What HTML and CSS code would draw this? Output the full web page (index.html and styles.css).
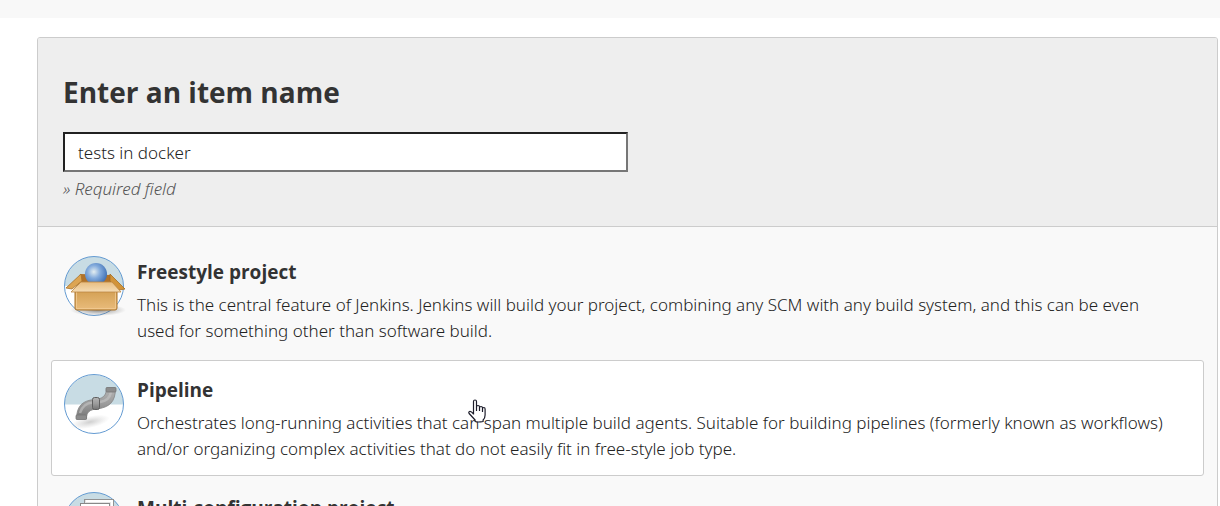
FILE: index.html
```html
<!DOCTYPE html>
<html lang="en">
<head>
<meta charset="utf-8">
<title>New Item</title>
<link rel="stylesheet" href="styles.css">
</head>
<body>
<header class="topbar"></header>
<main class="panel">
  <form class="name-form">
    <h1 class="form-title"><label for="name">Enter an item name</label></h1>
    <input class="name-input" id="name" type="text" value="tests in docker" aria-describedby="name-hint">
    <p class="hint" id="name-hint">» Required field</p>
  </form>
  <ul class="items">
    <li class="item">
      <svg class="item-icon" viewBox="0 0 64 62" aria-hidden="true">
        <defs>
          <radialGradient id="ball" cx=".4" cy=".4" r=".65"><stop offset="0" stop-color="#e4eef0"/><stop offset=".45" stop-color="#83abdc"/><stop offset="1" stop-color="#3c6eb4"/></radialGradient>
          <linearGradient id="box" x2="0" y2="1"><stop offset="0" stop-color="#d39f52"/><stop offset="1" stop-color="#e9bc7c"/></linearGradient>
          <linearGradient id="flap" x2="0" y2="1"><stop offset="0" stop-color="#e8bd80"/><stop offset="1" stop-color="#f5dcb4"/></linearGradient>
          <radialGradient id="shade"><stop offset="0" stop-color="#555" stop-opacity=".7"/><stop offset="1" stop-color="#777" stop-opacity="0"/></radialGradient>
        </defs>
        <circle cx="30" cy="30" r="29.500" fill="#fff"/>
        <path d="M.5 30a29.500 29.500 0 0 1 59 0z" fill="#c8dce4"/>
        <circle cx="30" cy="30" r="29.500" fill="none" stroke="#649bd2"/>
        <ellipse cx="34" cy="54" rx="28" ry="6" fill="url(#shade)"/>
        <path d="m16 18 31 1v14H13z" fill="#b0722a"/>
        <path d="m17 18-15 14 6 1 10-8z" fill="#dda552" stroke="#a87128" stroke-width=".8"/>
        <path d="m46 18 15 15-6 1-9-9z" fill="#d19339" stroke="#a46d22" stroke-width=".8"/>
        <circle cx="32" cy="18" r="11" fill="url(#ball)"/>
        <path d="M11 34h42v18q0 2-2 2H13q-2 0-2-2z" fill="url(#box)" stroke="#a8722a"/>
        <path d="M12.500 36v16.500h39V36" fill="none" stroke="#f2cc94" stroke-width=".8"/>
        <path d="M17 26h31l9 10H7z" fill="url(#flap)" stroke="#bb8641" stroke-width=".8"/>
      </svg>
      <div class="item-text">
        <h2 class="item-title">Freestyle project</h2>
        <p class="item-desc">This is the central feature of Jenkins. Jenkins will build your project, combining any SCM with any build system, and this can be even used for something other than software build.</p>
      </div>
    </li>
    <li class="item item-active">
      <svg class="item-icon" viewBox="0 0 64 62" aria-hidden="true">
        <defs>
          <linearGradient id="bend" x2="0" y2="1"><stop offset="0" stop-color="#b4b4b4"/><stop offset=".5" stop-color="#9c9c9c"/><stop offset="1" stop-color="#747474"/></linearGradient>
        </defs>
        <circle cx="30" cy="30" r="29.500" fill="#fff"/>
        <path d="M.5 30.500a29.500 29.500 0 0 1 59 0z" fill="#c8dce4"/>
        <circle cx="30" cy="30" r="29.500" fill="none" stroke="#649bd2"/>
        <ellipse cx="26" cy="48" rx="20" ry="6" fill="url(#shade)" opacity=".4" transform="rotate(-12 26 48)"/>
        <path d="M12.500 45c0-13 6-18.500 18-19.500 8-.7 12-3.500 12-11.500h9c0 14-6 19.500-19 21-7 .8-10 3-10 10z" fill="url(#bend)" stroke="#858585" stroke-width=".8"/>
        <path d="M16 39c2-7 6-10 13-10.500M36 28c7-1 10-4 11-10" fill="none" stroke="#c4c4c4" stroke-width="2.500" opacity=".6"/>
        <rect x="42" y="13.500" width="10" height="4.500" rx="1" fill="#8c8c8c" stroke="#777" stroke-width=".8"/>
        <rect x="12" y="41" width="10.500" height="4.500" rx="1" fill="#8c8c8c" stroke="#777" stroke-width=".8"/>
        <rect x="28.500" y="23.500" width="7" height="12" rx="2" fill="url(#bend)" stroke="#606060"/>
      </svg>
      <div class="item-text">
        <h2 class="item-title">Pipeline</h2>
        <p class="item-desc">Orchestrates long-running activities that can span multiple build agents. Suitable for building pipelines (formerly known as workflows) and/or organizing complex activities that do not easily fit in free-style job type.</p>
      </div>
      <svg class="pointer" viewBox="0 0 18 24" aria-hidden="true">
        <path d="M5.500 15V2.500q0-1.500 1.500-1.500t1.500 1.500V8q0-1.500 1.500-1.500T11.500 8v1q0-1.500 1.500-1.500T14.500 9v1q0-1.500 1.300-1.500t1.300 1.500v6q0 3-2 5v1.500q-5 1-8 0V21l-6-6.500q-.8-1.500.5-2t4 2.500z" fill="#fff" stroke="#1c1c2a" stroke-width="1.200" stroke-linejoin="round"/>
        <path d="M8.500 8v4M11.500 9v3M14.500 10v3" stroke="#1c1c2a" stroke-width="1.200"/>
      </svg>
    </li>
    <li class="item">
      <svg class="item-icon" viewBox="0 0 64 62" aria-hidden="true">
        <circle cx="30" cy="30" r="29.500" fill="#fff"/>
        <path d="M.5 30a29.500 29.500 0 0 1 59 0z" fill="#c8dce4"/>
        <circle cx="30" cy="30" r="29.500" fill="none" stroke="#649bd2"/>
        <rect x="20.500" y="7.500" width="29" height="38" fill="#e4e4e4" stroke="#929292"/>
        <path d="M22 9h26v36" fill="none" stroke="#fff" stroke-width="2"/>
        <rect x="16.500" y="11.500" width="29" height="38" fill="#e4e4e4" stroke="#888"/>
        <path d="M17 13h28" stroke="#fff" stroke-width="2"/>
      </svg>
      <div class="item-text">
        <h2 class="item-title">Multi-configuration project</h2>
      </div>
    </li>
  </ul>
</main>
</body>
</html>
```
FILE: styles.css
```css
* { box-sizing: border-box; }
body {
  margin: 0;
  height: 100vh;
  overflow: hidden;
  background: #fff;
  color: #222;
  font: 300 17px/26px "Noto Sans", "Open Sans", sans-serif;
}
h1, h2, p, ul { margin: 0; padding: 0; }
.topbar { height: 18px; background: #f8f8f8; }
.panel {
  margin: 19px 2px 0 37px;
  background: #f9f9f9;
  border: 1px solid #ccc;
  border-radius: 3px;
}
.name-form {
  padding: 34px 25px 24px;
  background: #eee;
  border-radius: 2px 2px 0 0;
  border-bottom: 1px solid #ccc;
}
.form-title { color: #333; font-family: "Open Sans", sans-serif; font-size: 28px; line-height: 40px; font-weight: 700; margin-bottom: 20px; }
.name-input {
  display: block;
  width: 50%;
  height: 40px;
  padding: 0 13px;
  border: 2px inset #767676;
  border-radius: 0;
  background: #fff;
  color: #222;
  font: inherit;
}
.hint { padding-top: 4px; color: #555; font-style: italic; }
.items { list-style: none; padding: 15px 13px; display: grid; gap: 2px; }
.item {
  position: relative;
  display: flex;
  gap: 9px;
  min-height: 116px;
  padding: 13px 12px;
  border: 1px solid transparent;
  border-radius: 3px;
}
.item-active { background: #fff; border-color: #ccc; }
.item-icon { flex: none; width: 64px; height: 62px; }
.item-text { padding: 3px 12px 0 0; }
.item-title { color: #333; font-family: "Open Sans", sans-serif; font-size: 19px; line-height: 26px; font-weight: 700; margin-bottom: 7px; }
.pointer { position: absolute; left: 416px; top: 38px; width: 18px; height: 24px; }
```
